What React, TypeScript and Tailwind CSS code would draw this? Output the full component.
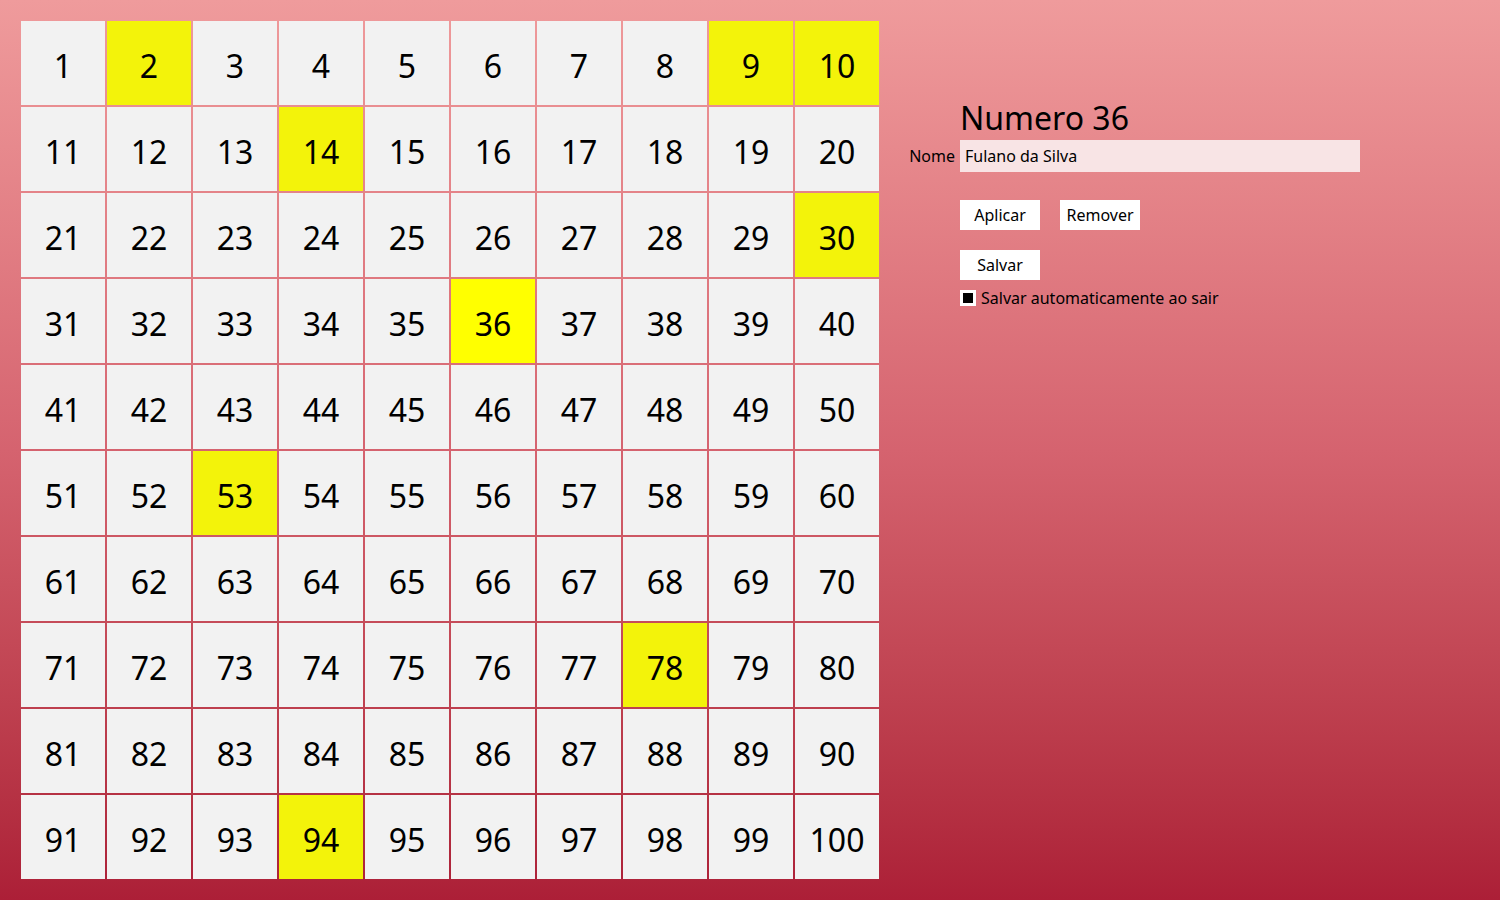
import { useState } from 'react';

const MARKED = [2, 9, 10, 14, 30, 53, 78, 94];

export default function App() {
  const [selected, setSelected] = useState(36);
  const [auto, setAuto] = useState(true);

  const cells = Array.from({ length: 100 }, (_, i) => i + 1);

  return (
    <div
      className="flex h-[900px] w-[1500px] bg-gradient-to-b from-[#ef9b9c] via-[#d5636f] to-[#ac1f37] text-black"
      style={{ fontFamily: '"Noto Sans", "Open Sans", sans-serif' }}
    >
      <div className="m-[21px] grid h-[858px] w-[858px] shrink-0 grid-cols-10 grid-rows-10 gap-[2px]">
        {cells.map((n) => {
          const bg =
            n === selected ? 'bg-[#ffff00]' : MARKED.includes(n) ? 'bg-[#f3f30a]' : 'bg-[#f2f2f2]';
          return (
            <button
              key={n}
              onClick={() => setSelected(n)}
              className={`flex items-center justify-center pt-[6px] text-[32px] leading-none ${bg}`}
            >
              {n}
            </button>
          );
        })}
      </div>

      <div className="ml-[9px] flex flex-col pt-[96px]">
        <h1 className="ml-[51px] text-[32px] leading-[44px]">Numero {selected}</h1>
        <div className="flex items-center">
          <label className="w-[51px] pr-[5px] text-right text-[16px]">Nome</label>
          <input
            defaultValue="Fulano da Silva"
            className="h-[32px] w-[400px] bg-[#f8e4e5] px-[5px] text-[16px] outline-none"
          />
        </div>
        <div className="ml-[51px] mt-[28px] flex gap-[20px]">
          <button className="h-[30px] w-[80px] bg-white text-[16px]">Aplicar</button>
          <button className="h-[30px] w-[80px] bg-white text-[16px]">Remover</button>
        </div>
        <button className="ml-[51px] mt-[20px] h-[30px] w-[80px] bg-white text-[16px]">Salvar</button>
        <label className="ml-[51px] mt-[10px] flex cursor-pointer items-center gap-[5px] text-[16px] leading-[16px]">
          <span
            onClick={() => setAuto(!auto)}
            className="flex h-[16px] w-[16px] items-center justify-center bg-white"
          >
            {auto && <span className="h-[10px] w-[10px] bg-black" />}
          </span>
          Salvar automaticamente ao sair
        </label>
      </div>
    </div>
  );
}
